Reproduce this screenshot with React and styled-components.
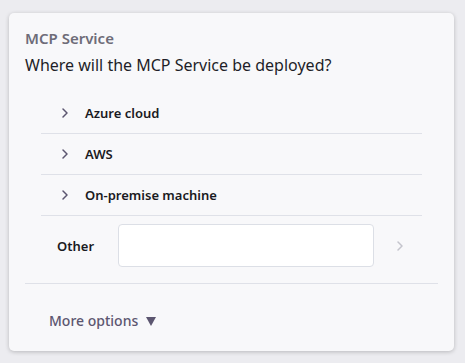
import React from 'react'
import styled, { createGlobalStyle } from 'styled-components'

const GlobalStyle = createGlobalStyle`
  body {
    margin: 0;
    background: #ececf0;
    font-family: "Noto Sans", "Open Sans", sans-serif;
  }
`

const Page = styled.div`
  padding: 13px 11px 12px 9px;
`

const Card = styled.div`
  box-sizing: border-box;
  width: 445px;
  height: 338px;
  background: #f8f8fa;
  border-radius: 5px;
  box-shadow: 0 1px 4px rgba(0, 0, 0, 0.22);
  padding: 15px 16px 0;
  display: flex;
  flex-direction: column;
`

const Title = styled.div`
  font-size: 15px;
  line-height: 20px;
  font-weight: 600;
  color: #6e6c78;
`

const Question = styled.div`
  margin-top: 6px;
  font-size: 16px;
  line-height: 22px;
  color: #1e1e28;
`

const List = styled.div`
  margin: 17px 16px 0;
`

const Row = styled.div`
  display: flex;
  align-items: center;
  height: 40px;
  border-bottom: 1px solid #dfe1e8;
  padding-left: 18px;
  gap: 14px;
  font-size: 13px;
  font-weight: 600;
  color: #1a1a22;
`

const Chevron = ({ color = '#5c5670', size = 12 }) => (
  <svg width={size} height={size} viewBox="0 0 12 12" fill="none">
    <path d="M4 2 L8 6 L4 10" stroke={color} strokeWidth="1.5" strokeLinecap="round" strokeLinejoin="round" />
  </svg>
)

const OtherRow = styled.div`
  display: flex;
  align-items: center;
  padding: 8px 0 16px 16px;
  font-size: 13px;
  font-weight: 600;
  color: #1a1a22;
`

const OtherLabel = styled.span`
  width: 61px;
`

const Input = styled.input`
  box-sizing: border-box;
  width: 256px;
  height: 43px;
  border: 1px solid #dcdfe6;
  border-radius: 4px;
  background: #fff;
  outline: none;
`

const Submit = styled.span`
  display: flex;
  margin-left: 20px;
`

const Footer = styled.div`
  border-top: 1px solid #dfe1e8;
  padding: 27px 24px 19px;
  font-size: 14px;
  line-height: 20px;
  font-weight: 500;
  color: #5c5670;
  display: flex;
  align-items: center;
  gap: 8px;
`

const options = ['Azure cloud', 'AWS', 'On-premise machine']

export default function App() {
  return (
    <Page>
      <GlobalStyle />
      <Card>
        <Title>MCP Service</Title>
        <Question>Where will the MCP Service be deployed?</Question>
        <List>
          {options.map(o => (
            <Row key={o}>
              <Chevron />
              <span>{o}</span>
            </Row>
          ))}
          <OtherRow>
            <OtherLabel>Other</OtherLabel>
            <Input />
            <Submit><Chevron color="#c4c4cc" /></Submit>
          </OtherRow>
        </List>
        <Footer>
          More options
          <svg width="10" height="9" viewBox="0 0 10 9"><path d="M0 0 H10 L5 9 Z" fill="#5c5670" /></svg>
        </Footer>
      </Card>
    </Page>
  )
}
